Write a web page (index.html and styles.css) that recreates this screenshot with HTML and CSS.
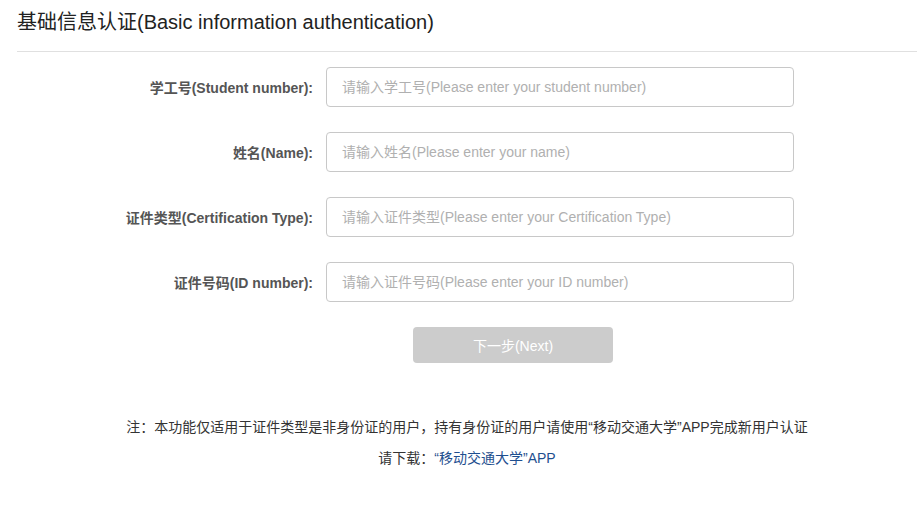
FILE: index.html
```html
<!DOCTYPE html>
<html lang="zh">
<head>
<meta charset="utf-8">
<title>基础信息认证</title>
<link rel="stylesheet" href="styles.css">
</head>
<body>
<div class="page">
  <h1 class="title">基础信息认证(Basic information authentication)</h1>
  <form class="form">
    <div class="row">
      <label class="label">学工号(Student number):</label>
      <input class="input" type="text" placeholder="请输入学工号(Please enter your student number)">
    </div>
    <div class="row">
      <label class="label">姓名(Name):</label>
      <input class="input" type="text" placeholder="请输入姓名(Please enter your name)">
    </div>
    <div class="row">
      <label class="label">证件类型(Certification Type):</label>
      <input class="input" type="text" placeholder="请输入证件类型(Please enter your Certification Type)">
    </div>
    <div class="row">
      <label class="label">证件号码(ID number):</label>
      <input class="input" type="text" placeholder="请输入证件号码(Please enter your ID number)">
    </div>
    <div class="actions">
      <button class="btn" type="button">下一步(Next)</button>
    </div>
  </form>
  <p class="note">注：本功能仅适用于证件类型是非身份证的用户，持有身份证的用户请使用“移动交通大学”APP完成新用户认证</p>
  <p class="download">请下载：<a class="link" href="#">“移动交通大学”APP</a></p>
</div>
</body>
</html>
```

FILE: styles.css
```css
* { box-sizing: border-box; }
html, body { margin: 0; padding: 0; background: #fff; }
body {
  font-family: "Liberation Sans", Arial, "Noto Sans CJK SC", sans-serif;
  color: #333;
}
.page {
  margin-left: 17px;
}
.title {
  margin: 0;
  padding-top: 10px;
  height: 52px;
  font-size: 20px;
  font-weight: normal;
  line-height: 24px;
  color: #222;
  border-bottom: 1px solid #e0e0e0;
}
.form {
  padding-top: 15px;
}
.row {
  display: flex;
  align-items: center;
  height: 40px;
  margin-bottom: 25px;
}
.label {
  width: 309px;
  padding-right: 13px;
  text-align: right;
  font-size: 14px;
  font-weight: bold;
  color: #555;
}
.input {
  width: 468px;
  height: 40px;
  border: 1px solid #c8c8c8;
  border-radius: 4px;
  padding: 0 15px;
  font-size: 14px;
  font-family: inherit;
  color: #333;
  outline: none;
}
.input::placeholder { color: #b0b0b0; }
.actions {
  padding-left: 396px;
}
.btn {
  width: 200px;
  height: 36px;
  border: none;
  border-radius: 4px;
  background: #cccccc;
  color: #fff;
  font-size: 14px;
  font-family: inherit;
}
.note {
  margin: 54px 0 0;
  text-align: center;
  font-size: 14px;
  line-height: 20px;
  color: #333;
}
.download {
  margin: 11px 0 0;
  text-align: center;
  font-size: 14px;
  line-height: 20px;
  color: #333;
}
.link {
  color: #1f4f8f;
  text-decoration: none;
}
```
